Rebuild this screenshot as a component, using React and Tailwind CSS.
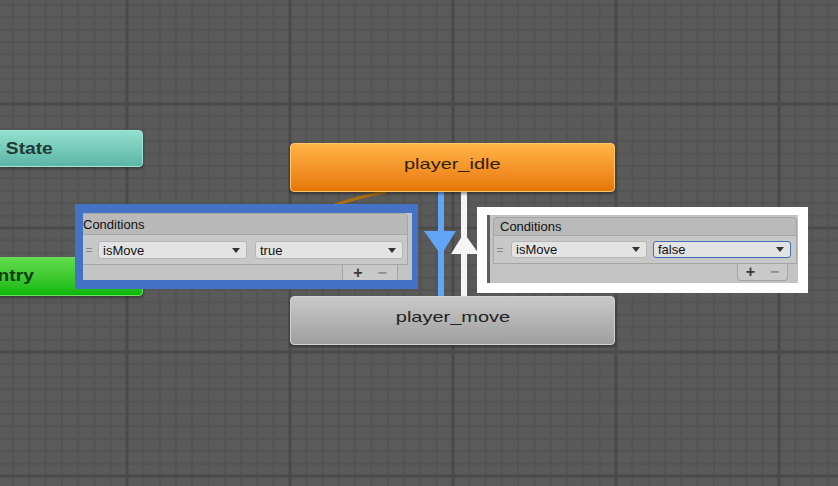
import React from 'react';

const W = 838;
const H = 486;

// canvas grid: minor every 16.3 x 12.4, major every 10 minors
function Grid() {
  const minorX = [];
  const minorY = [];
  for (let x = 127 - 16.3 * 8; x < W; x += 16.3) minorX.push(x);
  for (let y = 104 - 12.4 * 9; y < H; y += 12.4) minorY.push(y);
  const majorX = [-36, 127, 290, 453, 616, 779];
  const majorY = [-20, 104, 228, 352, 476];
  return (
    <svg className="absolute inset-0" width={W} height={H}>
      <rect width={W} height={H} fill="#5a5a5a" />
      {minorX.map((x, i) => (
        <rect key={'mx' + i} x={x - 1} y={0} width={2} height={H} fill="#545454" />
      ))}
      {minorY.map((y, i) => (
        <rect key={'my' + i} x={0} y={y - 1} width={W} height={2} fill="#545454" />
      ))}
      {majorX.map((x, i) => (
        <rect key={'Mx' + i} x={x - 1.5} y={0} width={3} height={H} fill="#4a4a4a" />
      ))}
      {majorY.map((y, i) => (
        <rect key={'My' + i} x={0} y={y - 1.5} width={W} height={3} fill="#4a4a4a" />
      ))}
      {/* transition from entry to idle, mostly hidden behind the panel */}
      <path d="M386 192 Q 360 196 320 210" stroke="#a86f12" strokeWidth="3" fill="none" />
    </svg>
  );
}

function Transitions() {
  return (
    <svg className="absolute inset-0" width={W} height={H}>
      <rect x="438" y="192" width="6" height="104" fill="#62a5f6" />
      <polygon points="424,231 456,231 441,255" fill="#62a5f6" />
      <rect x="461" y="192" width="6" height="104" fill="#f4f4f4" />
      <polygon points="451,254 479,254 464,233" fill="#f4f4f4" />
    </svg>
  );
}

function Dropdown({ label, className }) {
  return (
    <div
      className={`flex items-center justify-between rounded-[3px] border bg-[#e3e3e3] pl-[4px] pr-[6px] text-[13px] leading-none text-[#111] ${className}`}
    >
      <span>{label}</span>
      <span className="border-x-[4px] border-t-[5px] border-x-transparent border-t-[#333]" />
    </div>
  );
}

function Handle() {
  return (
    <div className="flex w-[6px] flex-col gap-[2px]">
      <div className="h-px bg-[#8a8a8a]" />
      <div className="h-px bg-[#8a8a8a]" />
    </div>
  );
}

function PlusMinus({ className }) {
  return (
    <div
      className={`flex items-center justify-center gap-[15px] border-x border-b border-[#a4a4a4] bg-[#c9c9c9] text-[16px] font-bold leading-none ${className}`}
    >
      <span className="text-[#3a3a3a]">+</span>
      <span className="text-[#8f8f8f]">−</span>
    </div>
  );
}

export default function App() {
  return (
    <div
      className="relative h-[486px] w-[838px] overflow-hidden bg-[#5a5a5a]"
      style={{ fontFamily: '"Liberation Sans", Arial, sans-serif' }}
    >
      <Grid />

      {/* Any State */}
      <div className="absolute left-[-182px] top-[130px] flex h-[37px] w-[325px] items-center justify-end rounded-[4px] border border-[#9fe6d6] bg-gradient-to-b from-[#93dfcd] to-[#5bb6a6] pr-[89px] shadow-[0_2px_3px_rgba(0,0,0,0.35)]">
        <span className="origin-right scale-x-[1.2] text-[16px] font-bold leading-none text-[#1f3a34]">Any State</span>
      </div>

      {/* Entry */}
      <div className="absolute left-[-182px] top-[257px] flex h-[39px] w-[325px] items-center justify-end rounded-[4px] border border-[#6fe060] bg-gradient-to-b from-[#5fdc4c] to-[#05b805] pb-[1px] pr-[108px] shadow-[0_2px_3px_rgba(0,0,0,0.35)]">
        <span className="origin-right scale-x-[1.2] text-[16px] font-bold leading-none text-[#0c3a08]">Entry</span>
      </div>

      <Transitions />

      {/* player_idle */}
      <div className="absolute left-[290px] top-[143px] flex h-[49px] w-[325px] items-center justify-center rounded-[4px] border border-[#ffc766] bg-gradient-to-b from-[#ffb445] to-[#e77600] pb-[8px] shadow-[0_2px_3px_rgba(0,0,0,0.4)]">
        <span className="scale-x-[1.33] text-[15px] leading-none text-[#2e1e06]">player_idle</span>
      </div>

      {/* player_move */}
      <div className="absolute left-[290px] top-[296px] flex h-[49px] w-[325px] items-center justify-center rounded-[4px] border border-[#d2d2d2] bg-gradient-to-b from-[#c9c9c9] to-[#9e9e9e] pb-[9px] shadow-[0_2px_3px_rgba(0,0,0,0.4)]">
        <span className="scale-x-[1.33] text-[15px] leading-none text-[#222]">player_move</span>
      </div>

      {/* blue framed conditions panel */}
      <div className="absolute left-[75px] top-[204px] h-[85px] w-[343px] border-b-[9px] border-l-[8px] border-r-[6px] border-t-[9px] border-[#4472c4]">
        <div className="h-full w-full overflow-hidden bg-[#c4c4c4]">
          <div className="ml-[-5px] flex w-[330px] flex-col">
            <div className="flex h-[22px] items-center rounded-t-[4px] border border-[#a6a6a6] bg-[#b9b9b9] pl-[4px] text-[13px] leading-none text-[#111]">
              Conditions
            </div>
            <div className="flex h-[30px] items-start gap-[6px] border-x border-b border-[#a6a6a6] bg-[#c8c8c8] pl-[7px] pt-[6px]">
              <div className="mt-[7px]">
                <Handle />
              </div>
              <Dropdown label="isMove" className="h-[18px] w-[149px] border-[#b6b6b6]" />
              <Dropdown label="true" className="ml-[2px] h-[18px] w-[148px] border-[#b6b6b6]" />
            </div>
            <div className="flex justify-end pr-[10px]">
              <PlusMinus className="h-[17px] w-[56px]" />
            </div>
          </div>
        </div>
      </div>

      {/* white framed conditions panel */}
      <div className="absolute left-[477px] top-[207px] h-[86px] w-[331px] border-b-[10px] border-l-[10px] border-r-[10px] border-t-[8px] border-white">
        <div className="flex h-full w-full overflow-hidden bg-[#c3c3c3]">
          <div className="w-[3px] bg-[#5e5e5e]" />
          <div className="flex w-[307px] flex-col pl-[3px] pt-[2px]">
            <div className="flex h-[19px] items-center rounded-t-[4px] border border-[#a6a6a6] bg-[#bababa] pl-[6px] text-[13px] leading-none text-[#111]">
              Conditions
            </div>
            <div className="flex h-[28px] items-start gap-[8px] border-x border-b border-[#a6a6a6] bg-[#c8c8c8] pl-[3px] pt-[5px]">
              <div className="mt-[7px]">
                <Handle />
              </div>
              <Dropdown label="isMove" className="h-[17px] w-[136px] border-[#b6b6b6]" />
              <Dropdown label="false" className="-ml-[2px] h-[17px] w-[138px] border-[#3f6eb4]" />
            </div>
            <div className="flex justify-end pr-[9px]">
              <PlusMinus className="h-[17px] w-[51px] rounded-b-[4px]" />
            </div>
          </div>
        </div>
      </div>
    </div>
  );
}
